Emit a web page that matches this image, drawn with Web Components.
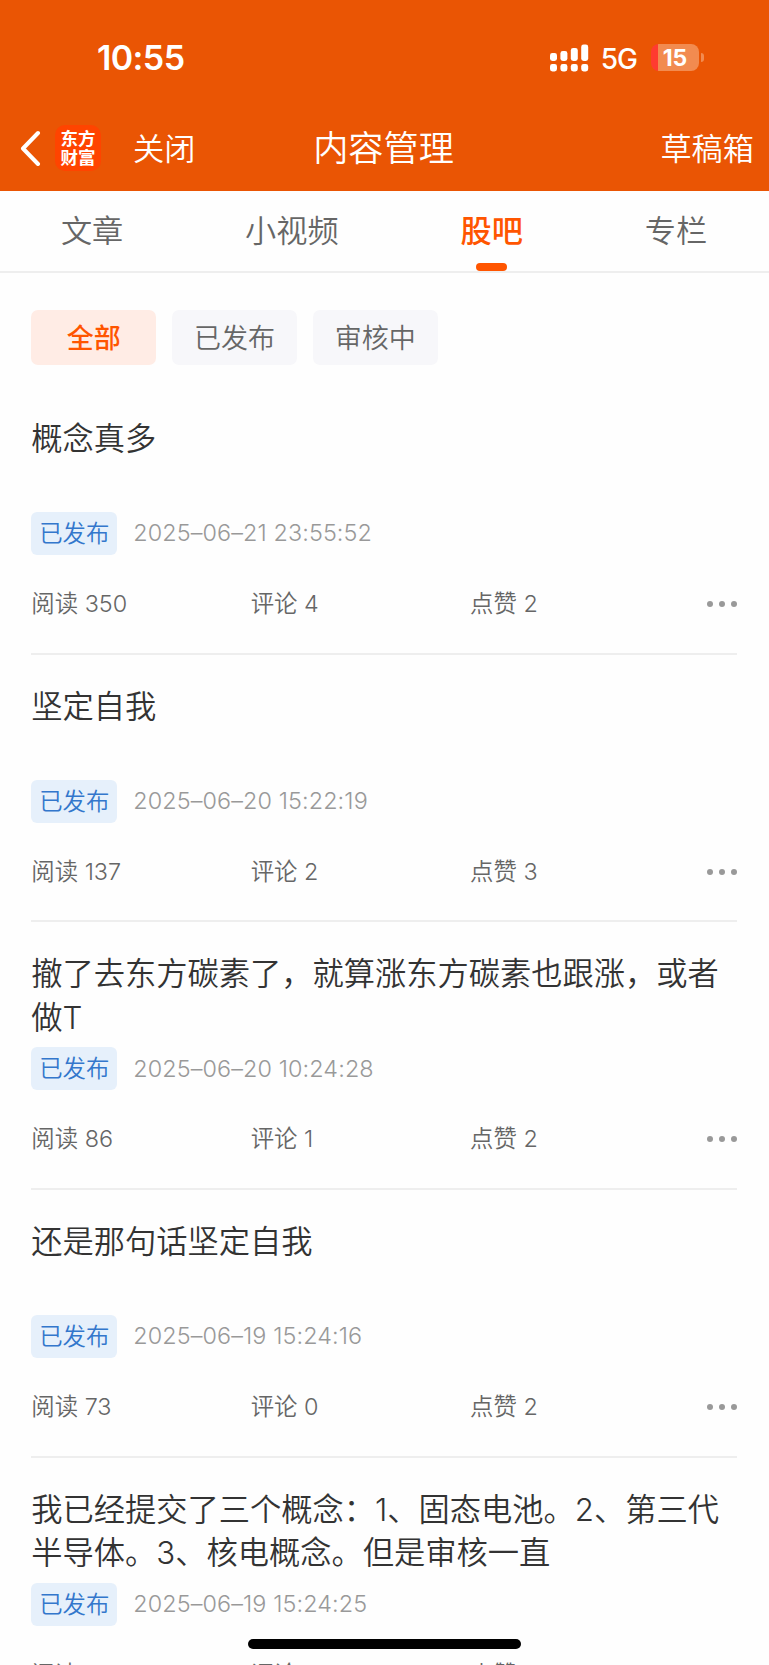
<!DOCTYPE html>
<html lang="zh-CN">
<head>
<meta charset="utf-8">
<title>内容管理</title>
<style>
html, body {
    margin: 0;
    height: 1665px;
    overflow: hidden;
}
body {
    background: #fefefe;
    color: #333;
    font-family: Inter, "Noto Sans CJK SC", sans-serif;
    font-weight: 350;
}
</style>
</head>
<body>
<content-manager></content-manager>
<script>
function attach(el, html) {
    const t = document.createElement("template");
    t.innerHTML = html;
    el.attachShadow({mode: "open"}).appendChild(t.content.cloneNode(true));
}

class StatusBar extends HTMLElement {
    constructor() {
        super();
        attach(this, `
<style>
:host {
    display: flex;
    justify-content: space-between;
    align-items: center;
    height: 115px;
    padding: 0 65px 0 97px;
    box-sizing: border-box;
}
time {
    font-size: 34px;
    font-weight: 600;
    letter-spacing: -0.6px;
    line-height: 40px;
}
#right {
    display: flex;
    align-items: center;
}
#net {
    margin: 3px 14px 0 12px;
    font-size: 28px;
    font-weight: 500;
    letter-spacing: -1px;
    line-height: 34px;
}
#battery {
    width: 48px;
    height: 27px;
    border-radius: 8px;
    background: linear-gradient(90deg, #ff3b30 7px, #f28b50 7px);
    font-size: 23px;
    font-weight: 700;
    line-height: 28px;
    text-align: center;
}
#nub {
    width: 3px;
    height: 9px;
    margin-left: 2px;
    border-radius: 0 3px 3px 0;
    background: #f28b50;
}
</style>
<time>10:55</time>
<div id="right">
    <svg width="39" height="28" viewBox="0 0 39 28" fill="#fff">
        <rect x="0" y="9" width="7" height="8" rx="2.4"/>
        <rect x="10.4" y="7" width="7" height="10" rx="2.4"/>
        <rect x="20.8" y="4" width="7" height="13" rx="2.4"/>
        <rect x="31.2" y="0.5" width="7" height="16.5" rx="2.4"/>
        <rect x="0" y="20" width="7" height="7.5" rx="2.4"/>
        <rect x="10.4" y="20" width="7" height="7.5" rx="2.4"/>
        <rect x="20.8" y="20" width="7" height="7.5" rx="2.4"/>
        <rect x="31.2" y="20" width="7" height="7.5" rx="2.4"/>
    </svg>
    <span id="net">5G</span>
    <div id="battery">15</div>
    <div id="nub"></div>
</div>`);
    }
}
customElements.define("status-bar", StatusBar);

class AppLogo extends HTMLElement {
    constructor() {
        super();
        attach(this, `
<style>
:host {
    display: flex;
    flex-direction: column;
    align-items: center;
    justify-content: center;
    width: 46px;
    height: 46px;
    border-radius: 10px;
    background: #ff4400;
    font-size: 17.5px;
    font-weight: 700;
    line-height: 19px;
}
</style>
<span>东方</span>
<span>财富</span>`);
    }
}
customElements.define("app-logo", AppLogo);

class NavBar extends HTMLElement {
    constructor() {
        super();
        attach(this, `
<style>
:host {
    display: grid;
    grid-template-columns: 1fr auto 1fr;
    align-items: center;
    height: 66px;
    margin-bottom: 10px;
    padding: 0 15px 0 13px;
    font-size: 31.2px;
    line-height: 44px;
}
#left {
    display: flex;
    align-items: center;
    padding-left: 7px;
}
#left span {
    padding-top: 2px;
}
app-logo {
    margin: 0 32px 0 14px;
}
h1 {
    margin: 0;
    font-size: 35.2px;
    font-weight: 350;
}
#right {
    padding-top: 2px;
    text-align: right;
}
</style>
<div id="left">
    <svg width="21" height="36" viewBox="0 0 21 36" fill="none" stroke="#fff" stroke-width="4" stroke-linecap="round" stroke-linejoin="round">
        <path d="M18 3 3 18.5 18 34"/>
    </svg>
    <app-logo></app-logo>
    <span>关闭</span>
</div>
<h1><slot></slot></h1>
<div id="right">草稿箱</div>`);
    }
}
customElements.define("nav-bar", NavBar);

class TabItem extends HTMLElement {
    constructor() {
        super();
        attach(this, `
<style>
:host {
    display: flex;
    flex-direction: column;
    align-items: center;
    height: 80px;
    color: #666;
    font-size: 31.2px;
}
span {
    padding-top: 8px;
    line-height: 64px;
}
:host([active]) {
    color: #ff5500;
    font-weight: 500;
}
i {
    display: none;
    width: 31px;
    height: 8px;
    border-radius: 4px;
    background: #ff5500;
}
:host([active]) i {
    display: block;
}
</style>
<span><slot></slot></span>
<i></i>`);
    }
}
customElements.define("tab-item", TabItem);

class FilterChip extends HTMLElement {
    constructor() {
        super();
        attach(this, `
<style>
:host {
    width: 125px;
    height: 54.5px;
    border-radius: 7px;
    background: #f7f7fa;
    color: #666;
    font-size: 27px;
    line-height: 57px;
    text-align: center;
}
:host([active]) {
    background: #ffece5;
    color: #ff5500;
    font-weight: 500;
}
</style>
<slot></slot>`);
    }
}
customElements.define("filter-chip", FilterChip);

class PostItem extends HTMLElement {
    constructor() {
        super();
        attach(this, `
<style>
:host {
    display: block;
    height: 267.7px;
    box-sizing: border-box;
    padding-top: 31px;
    border-bottom: 2px solid #eee;
}
h2 {
    height: 86.6px;
    margin: 0 0 7.3px;
    font-size: 31.25px;
    font-weight: 350;
    line-height: 43.3px;
}
#meta {
    display: flex;
    align-items: center;
    height: 43px;
    color: #999;
    font-size: 23.4px;
}
#badge {
    width: 86px;
    margin-right: 16px;
    border-radius: 6px;
    background: #e6f0fb;
    color: #3377cc;
    line-height: 43px;
    text-align: center;
}
time {
    letter-spacing: 0.1px;
    line-height: 42px;
}
#stats {
    display: grid;
    grid-template-columns: 219.4px 219.4px 1fr auto;
    align-items: center;
    height: 44px;
    margin-top: 27px;
    color: #666;
    font-size: 23.4px;
    line-height: 44px;
}
</style>
<h2><slot></slot></h2>
<div id="meta">
    <span id="badge">已发布</span>
    <time></time>
</div>
<div id="stats">
    <span id="reads"></span>
    <span id="comments"></span>
    <span id="likes"></span>
    <svg width="30" height="8" viewBox="0 0 30 8" fill="#999">
        <circle cx="3" cy="4" r="3"/>
        <circle cx="15" cy="4" r="3"/>
        <circle cx="27" cy="4" r="3"/>
    </svg>
</div>`);
    }
    connectedCallback() {
        const root = this.shadowRoot;
        root.querySelector("time").textContent = this.getAttribute("time");
        root.getElementById("reads").textContent = "阅读 " + this.getAttribute("reads");
        root.getElementById("comments").textContent = "评论 " + this.getAttribute("comments");
        root.getElementById("likes").textContent = "点赞 " + this.getAttribute("likes");
    }
}
customElements.define("post-item", PostItem);

class HomeIndicator extends HTMLElement {
    constructor() {
        super();
        attach(this, `
<style>
:host {
    display: block;
    position: absolute;
    left: 248px;
    top: 1639px;
    width: 273px;
    height: 10px;
    border-radius: 5px;
    background: #000;
}
</style>`);
    }
}
customElements.define("home-indicator", HomeIndicator);

class ContentManager extends HTMLElement {
    constructor() {
        super();
        attach(this, `
<style>
:host {
    display: block;
    height: 1665px;
    overflow: hidden;
}
header {
    height: 191px;
    background: #ea5504;
    color: #fff;
}
nav {
    display: flex;
    justify-content: space-around;
    padding-right: 1px;
    border-bottom: 2px solid #eee;
}
#filters {
    display: flex;
    gap: 15.7px;
    padding: 37.3px 31.3px 0;
}
main {
    padding: 22.2px 32px 0 31.3px;
}
</style>
<header>
    <status-bar></status-bar>
    <nav-bar>内容管理</nav-bar>
</header>
<nav>
    <tab-item>文章</tab-item>
    <tab-item>小视频</tab-item>
    <tab-item active>股吧</tab-item>
    <tab-item>专栏</tab-item>
</nav>
<div id="filters">
    <filter-chip active>全部</filter-chip>
    <filter-chip>已发布</filter-chip>
    <filter-chip>审核中</filter-chip>
</div>
<main>
    <post-item time="2025–06–21 23:55:52" reads="350" comments="4" likes="2">概念真多</post-item>
    <post-item time="2025–06–20 15:22:19" reads="137" comments="2" likes="3">坚定自我</post-item>
    <post-item time="2025–06–20 10:24:28" reads="86" comments="1" likes="2">撤了去东方碳素了，就算涨东方碳素也跟涨，或者做T</post-item>
    <post-item time="2025–06–19 15:24:16" reads="73" comments="0" likes="2">还是那句话坚定自我</post-item>
    <post-item time="2025–06–19 15:24:25" reads="70" comments="0" likes="2">我已经提交了三个概念：1、固态电池。2、第三代半导体。3、核电概念。但是审核一直</post-item>
</main>
<home-indicator></home-indicator>`);
    }
}
customElements.define("content-manager", ContentManager);
</script>
</body>
</html>
